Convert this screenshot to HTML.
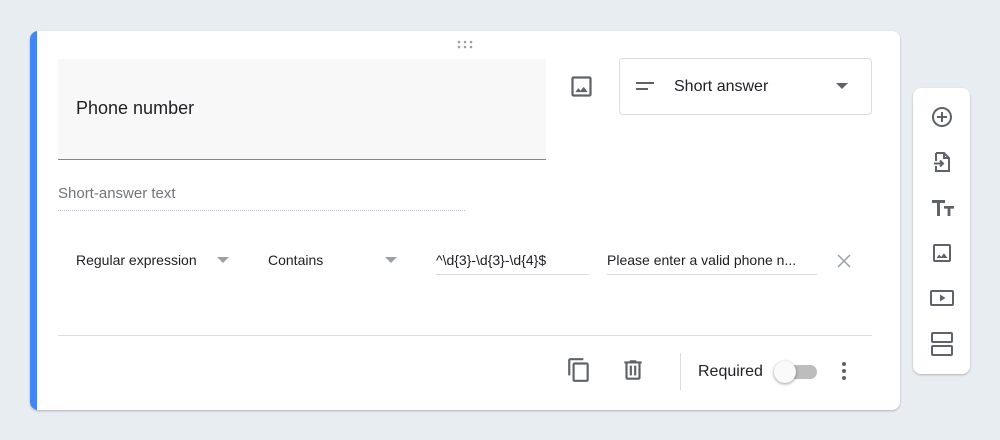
<!DOCTYPE html>
<html><head><style>
*{box-sizing:border-box;margin:0;padding:0}
body{width:1000px;height:440px;background:#e8edf2;font-family:"Liberation Sans",Arial,sans-serif;position:relative;overflow:hidden;color:#202124}
.card{position:absolute;left:30px;top:31px;width:870px;height:379px;background:#fff;border-radius:8px;box-shadow:0 1px 2px rgba(0,0,0,.25);overflow:hidden}
.bar{position:absolute;left:0;top:0;width:7px;height:100%;background:#4285f4}
.a{position:absolute}
.side{position:absolute;left:913px;top:88px;width:57px;height:286px;background:#fff;border-radius:8px;box-shadow:0 1px 2px rgba(0,0,0,.25)}
svg{position:absolute}
</style></head><body>
<div class="card">
<div class="bar"></div>
<div class="a" style="left:426px;top:9px;width:18px;height:10px">
<svg width="18" height="10"><g fill="#9aa0a6"><circle cx="3" cy="2" r="1.3"/><circle cx="9" cy="2" r="1.3"/><circle cx="15" cy="2" r="1.3"/><circle cx="3" cy="7" r="1.3"/><circle cx="9" cy="7" r="1.3"/><circle cx="15" cy="7" r="1.3"/></g></svg></div>
<div class="a" style="left:28px;top:28px;width:488px;height:101px;background:#f8f8f8;border-bottom:1px solid #80868b"></div>
<div class="a" style="left:46px;top:67px;font-size:18px">Phone number</div>
<svg style="left:538px;top:42px" width="27" height="27" viewBox="0 0 24 24"><path fill="#5f6368" d="M19 3H5a2 2 0 0 0-2 2v14a2 2 0 0 0 2 2h14a2 2 0 0 0 2-2V5a2 2 0 0 0-2-2zm0 16H5V5h14v14zm-5.04-6.71-2.75 3.54-1.96-2.36L6.5 17h11l-3.54-4.71z"/></svg>
<div class="a" style="left:589px;top:27px;width:253px;height:57px;border:1px solid #dadce0;border-radius:4px"></div>
<svg style="left:606px;top:48px" width="20" height="14"><rect x="0" y="3" width="18" height="2" fill="#5f6368"/><rect x="0" y="9" width="12" height="2" fill="#5f6368"/></svg>
<div class="a" style="left:644px;top:47px;font-size:16px">Short answer</div>
<svg style="left:806px;top:52px" width="12" height="7"><path d="M0 0h12L6 6z" fill="#5f6368"/></svg>
<div class="a" style="left:28px;top:154px;font-size:15px;color:#70757a">Short-answer text</div>
<div class="a" style="left:28px;top:179px;width:407px;border-bottom:1px dotted #bdc1c6"></div>
<div class="a" style="left:46px;top:221px;font-size:14px">Regular expression</div>
<svg style="left:187px;top:226px" width="12" height="7"><path d="M0 0h12L6 6z" fill="#9aa0a6"/></svg>
<div class="a" style="left:238px;top:221px;font-size:14px">Contains</div>
<svg style="left:355px;top:226px" width="12" height="7"><path d="M0 0h12L6 6z" fill="#9aa0a6"/></svg>
<div class="a" style="left:406px;top:221px;font-size:14px">^\d{3}-\d{3}-\d{4}$</div>
<div class="a" style="left:406px;top:243px;width:153px;border-bottom:1px solid #dadce0"></div>
<div class="a" style="left:577px;top:221px;font-size:14px">Please enter a valid phone n...</div>
<div class="a" style="left:577px;top:243px;width:210px;border-bottom:1px solid #dadce0"></div>
<svg style="left:807px;top:223px" width="14" height="14"><path d="M1 1l12 12M13 1L1 13" stroke="#9aa0a6" stroke-width="1.5"/></svg>
<div class="a" style="left:28px;top:304px;width:814px;border-bottom:1px solid #dadce0"></div>
<svg style="left:536px;top:326px" width="26" height="26" viewBox="0 0 24 24"><path fill="#5f6368" d="M16 1H4c-1.1 0-2 .9-2 2v14h2V3h12V1zm3 4H8c-1.1 0-2 .9-2 2v14c0 1.1.9 2 2 2h11c1.1 0 2-.9 2-2V7c0-1.1-.9-2-2-2zm0 16H8V7h11v14z"/></svg>
<svg style="left:590px;top:326px" width="26" height="26" viewBox="0 0 24 24"><path fill="#5f6368" d="M15 4V3H9v1H4v2h1v13c0 1.1.9 2 2 2h10c1.1 0 2-.9 2-2V6h1V4h-5zm2 15H7V6h10v13zM9 8h2v9H9zm4 0h2v9h-2z"/></svg>
<div class="a" style="left:650px;top:322px;height:37px;border-left:1px solid #dadce0"></div>
<div class="a" style="left:668px;top:332px;font-size:16px">Required</div>
<div class="a" style="left:750px;top:334px;width:37px;height:14px;border-radius:7px;background:#bdbdbd"></div>
<div class="a" style="left:744px;top:330px;width:22px;height:22px;border-radius:50%;background:#fafafa;box-shadow:0 1px 3px rgba(0,0,0,.4)"></div>
<svg style="left:811px;top:329px" width="6" height="22"><g fill="#5f6368"><circle cx="3" cy="4" r="2"/><circle cx="3" cy="11" r="2"/><circle cx="3" cy="18" r="2"/></g></svg>
</div>
<div class="side">
<svg style="left:17px;top:17px" width="24" height="24" viewBox="0 0 24 24"><path fill="#5f6368" d="M13 7h-2v4H7v2h4v4h2v-4h4v-2h-4V7zm-1-5C6.48 2 2 6.48 2 12s4.48 10 10 10 10-4.48 10-10S17.52 2 12 2zm0 18c-4.41 0-8-3.59-8-8s3.59-8 8-8 8 3.59 8 8-3.59 8-8 8z"/></svg>
<svg style="left:17px;top:62px" width="24" height="24" viewBox="0 0 24 24"><path fill="none" stroke="#5f6368" stroke-width="2" d="M6 3h8l5 5v13H6v-5M6 11V3M14 3v5h5"/><path fill="none" stroke="#5f6368" stroke-width="2" d="M4 13.5h9M10 10.5l3 3-3 3"/></svg>
<svg style="left:17px;top:108px" width="26" height="24" viewBox="0 0 26 24"><path fill="#5f6368" d="M2 4h13v3h-5v13H7V7H2zM14 10h10v2.6h-3.6V20h-2.8v-7.4H14z"/></svg>
<svg style="left:17px;top:153px" width="24" height="24" viewBox="0 0 24 24"><path fill="#5f6368" d="M19 3H5a2 2 0 0 0-2 2v14a2 2 0 0 0 2 2h14a2 2 0 0 0 2-2V5a2 2 0 0 0-2-2zm0 16H5V5h14v14zm-5.04-6.71-2.75 3.54-1.96-2.36L6.5 17h11l-3.54-4.71z"/></svg>
<svg style="left:16px;top:198px" width="26" height="24" viewBox="0 0 26 24"><rect x="2" y="5" width="22" height="14" rx="1" fill="none" stroke="#5f6368" stroke-width="2"/><path d="M11 8.5v7l5.5-3.5z" fill="#5f6368"/></svg>
<svg style="left:17px;top:243px" width="24" height="26" viewBox="0 0 24 26"><rect x="2" y="2" width="20" height="9" rx="1" fill="none" stroke="#5f6368" stroke-width="2"/><rect x="2" y="15" width="20" height="9" rx="1" fill="none" stroke="#5f6368" stroke-width="2"/></svg>
</div>
</body></html>
